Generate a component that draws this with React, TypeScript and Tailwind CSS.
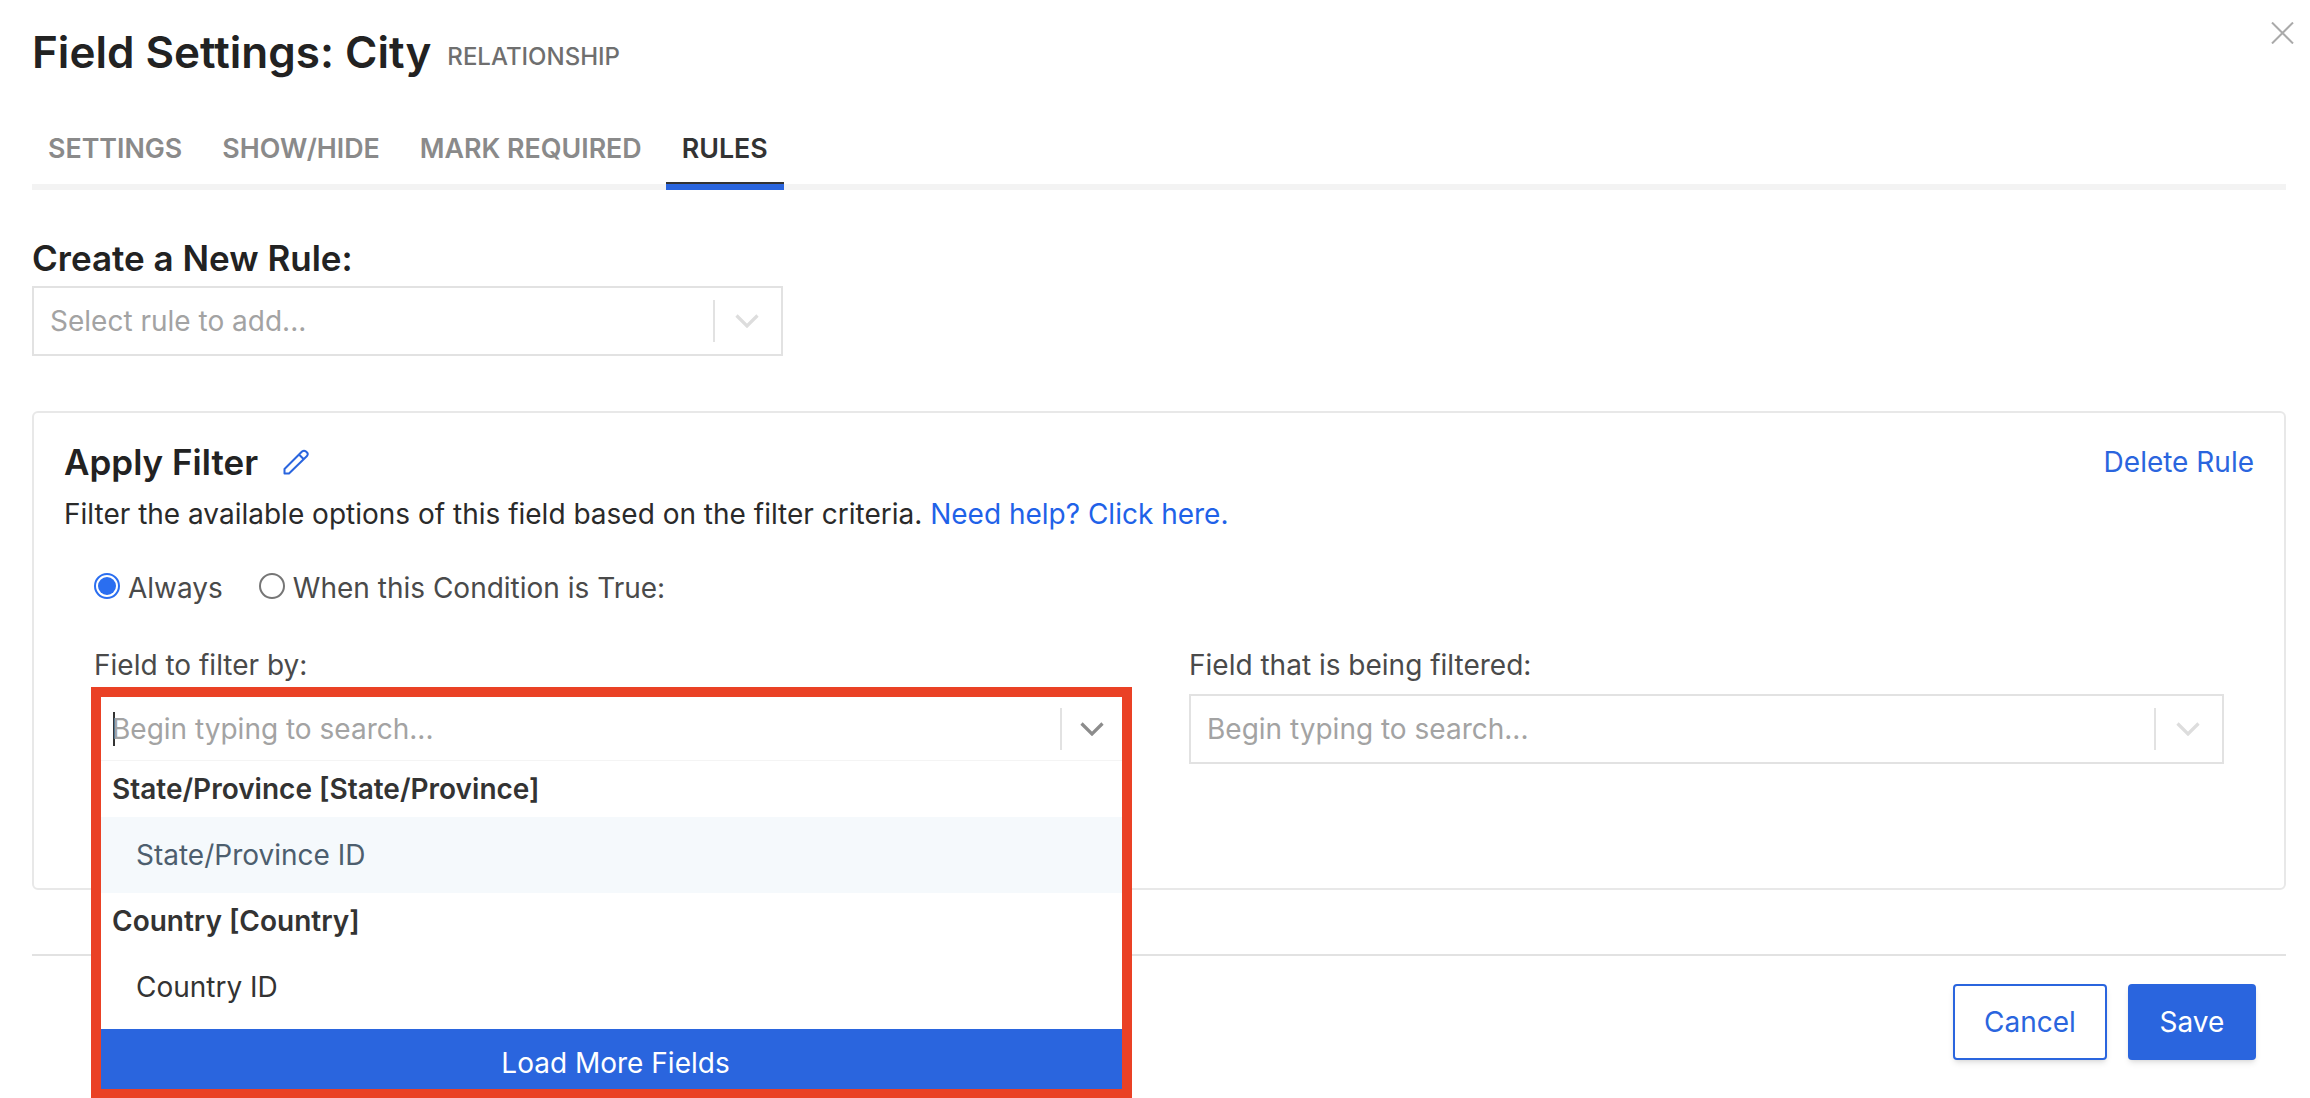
const inter = { fontFamily: '"Inter", "Liberation Sans", sans-serif' };

function Chevron({ className }: { className: string }) {
  return (
    <svg viewBox="0 0 24 14" className={`w-6 h-3.5 ${className}`} fill="none" stroke="currentColor" strokeWidth="3.2">
      <path d="M1.5 1.5 L12 12 L22.5 1.5" />
    </svg>
  );
}

function SelectBox({ placeholder, className }: { placeholder: string; className: string }) {
  return (
    <div className={`flex items-center h-[70px] border-2 border-[#e2e2e2] bg-white ${className}`}>
      <span className="flex-1 pl-4 text-[28px] text-[#a3a3a3]">{placeholder}</span>
      <span className="w-0.5 h-[42px] bg-[#e2e2e2]" />
      <span className="w-[66px] flex justify-center pr-0.5">
        <Chevron className="text-[#dddddd]" />
      </span>
    </div>
  );
}

function Radio({ checked, label }: { checked: boolean; label: string }) {
  return (
    <label className="flex items-center gap-[8px]">
      {checked ? (
        <span className="w-[26px] h-[26px] -mt-1 rounded-full border-2 border-[#2a6ef0] flex items-center justify-center">
          <span className="w-[18px] h-[18px] rounded-full bg-[#2a6ef0]" />
        </span>
      ) : (
        <span className="w-[26px] h-[26px] -mt-1 rounded-full border-2 border-[#767676]" />
      )}
      <span className="text-[28px] text-[#4a4a4a]">{label}</span>
    </label>
  );
}

export default function App() {
  const tabs = ["SETTINGS", "SHOW/HIDE", "MARK REQUIRED"];

  return (
    <div style={inter} className="relative w-[2310px] h-[1098px] overflow-hidden bg-white px-8 text-[#222222]">
      {/* Close */}
      <button className="absolute left-[2271px] top-[22px] text-[#aaaaaa]">
        <svg viewBox="0 0 23 22" className="w-[23px] h-[22px]" stroke="currentColor" strokeWidth="2" fill="none">
          <path d="M1 0.5 L22 21.5 M22 0.5 L1 21.5" />
        </svg>
      </button>

      {/* Header */}
      <div className="flex items-center gap-4 pt-[26px] pb-[6px] h-[84px]">
        <h1 className="text-[44px] leading-[52px] font-semibold text-[#222222]">Field Settings: City</h1>
        <span className="mt-[9px] text-[24px] font-medium text-[#6f6f6f]">RELATIONSHIP</span>
      </div>

      {/* Tabs */}
      <div className="flex gap-2 h-[106px] w-[2254px] border-b-[6px] border-[#f3f3f3]">
        {tabs.map((tab) => (
          <div key={tab} className="px-4 pt-[46px] text-[26.8px] leading-9 font-semibold text-[#8a8a8a]">
            {tab}
          </div>
        ))}
        <div className="relative h-[106px] px-4 pt-[46px] text-[26.8px] leading-9 font-semibold text-[#333333] border-b-[6px] border-[#2a65de]">
          RULES
          <span className="absolute left-0 right-0 bottom-0 h-0.5 bg-[#333333]" />
        </div>
      </div>

      {/* Create rule */}
      <h2 className="mt-[44px] text-[35px] leading-[48px] font-semibold">Create a New Rule:</h2>
      <SelectBox placeholder="Select rule to add..." className="mt-1 w-[751px]" />

      {/* Rule card */}
      <div className="mt-[55px] w-[2254px] h-[479px] border-2 border-[#e8e8e8] rounded-md px-[30px] pt-[26px]">
        <div className="flex items-center justify-between">
          <div className="flex items-center gap-[25px]">
            <h3 className="text-[35px] leading-[46px] font-semibold">Apply Filter</h3>
            <svg viewBox="0 0 26 26" className="w-[26px] h-[26px] text-[#2a65de]" fill="none" stroke="currentColor" strokeWidth="2" strokeLinejoin="round">
              <path d="M1.5 24.5 V20 L19 2.5 Q21 1 23 2.5 L24 3.5 Q25.5 5 24 7 L6 24.5 Z M16 5.5 L21 10.5" />
            </svg>
          </div>
          <a className="text-[28px] text-[#2a65de]">Delete Rule</a>
        </div>
        <p className="mt-[9px] text-[28px] leading-10 text-[#2a2a2a]">
          Filter the available options of this field based on the filter criteria.{" "}
          <a className="text-[#1f62e8]">Need help? Click here.</a>
        </p>
        <div className="flex gap-9 mt-[33px] pl-[30px]">
          <Radio checked label="Always" />
          <Radio checked={false} label="When this Condition is True:" />
        </div>
        <div className="flex gap-[55px] mt-9 pl-[30px]">
          <div className="relative w-[1040px]">
            <label className="block text-[28px] leading-10 text-[#4a4a4a]">Field to filter by:</label>
            {/* open dropdown with the annotation frame round it */}
            <div className="absolute -left-[3px] top-[42px] w-[1041px] h-[411px] border-[10px] border-b-[9px] border-[#ea4125] bg-white flex flex-col">
              <div className="flex items-center h-[64px] shrink-0 border-b border-[#f4f4f4]">
                <span className="w-0.5 h-[34px] ml-3 bg-[#333333]" />
                <span className="flex-1 -ml-[3px] text-[28px] text-[#a3a3a3]">Begin typing to search...</span>
                <span className="w-0.5 h-[42px] bg-[#e2e2e2]" />
                <span className="w-[60px] flex justify-center">
                  <Chevron className="text-[#8c8c8c]" />
                </span>
              </div>
              <div className="h-[56px] flex items-center pl-[11px] text-[28px] font-semibold text-[#333333]">State/Province [State/Province]</div>
              <div className="h-[76px] flex items-center pl-[35px] text-[28px] bg-[#f5f9fc] text-[#4d5e6e]">State/Province ID</div>
              <div className="h-[56px] flex items-center pl-[11px] text-[28px] font-semibold text-[#333333]">Country [Country]</div>
              <div className="h-[80px] pb-1 flex items-center pl-[35px] text-[28px] text-[#333333]">Country ID</div>
              <div className="flex-1 flex items-center justify-center pl-2 pt-2 text-[28px] bg-[#2a65de] text-white">Load More Fields</div>
            </div>
          </div>
          <div className="w-[1035px]">
            <label className="block text-[28px] leading-10 text-[#4a4a4a]">Field that is being filtered:</label>
            <SelectBox placeholder="Begin typing to search..." className="mt-[9px]" />
          </div>
        </div>
      </div>

      {/* Footer */}
      <div className="mt-16 w-[2254px] h-0.5 bg-[#e2e2e2]" />
      <div className="flex justify-end gap-[21px] mt-[28px] w-[2224px]">
        <button className="w-[154px] h-[76px] rounded bg-white border-2 border-[#2a65de] text-[28px] text-[#2a65de] shadow-md">Cancel</button>
        <button className="w-[128px] h-[76px] rounded bg-[#2a65de] text-[28px] text-white shadow-md">Save</button>
      </div>
    </div>
  );
}
